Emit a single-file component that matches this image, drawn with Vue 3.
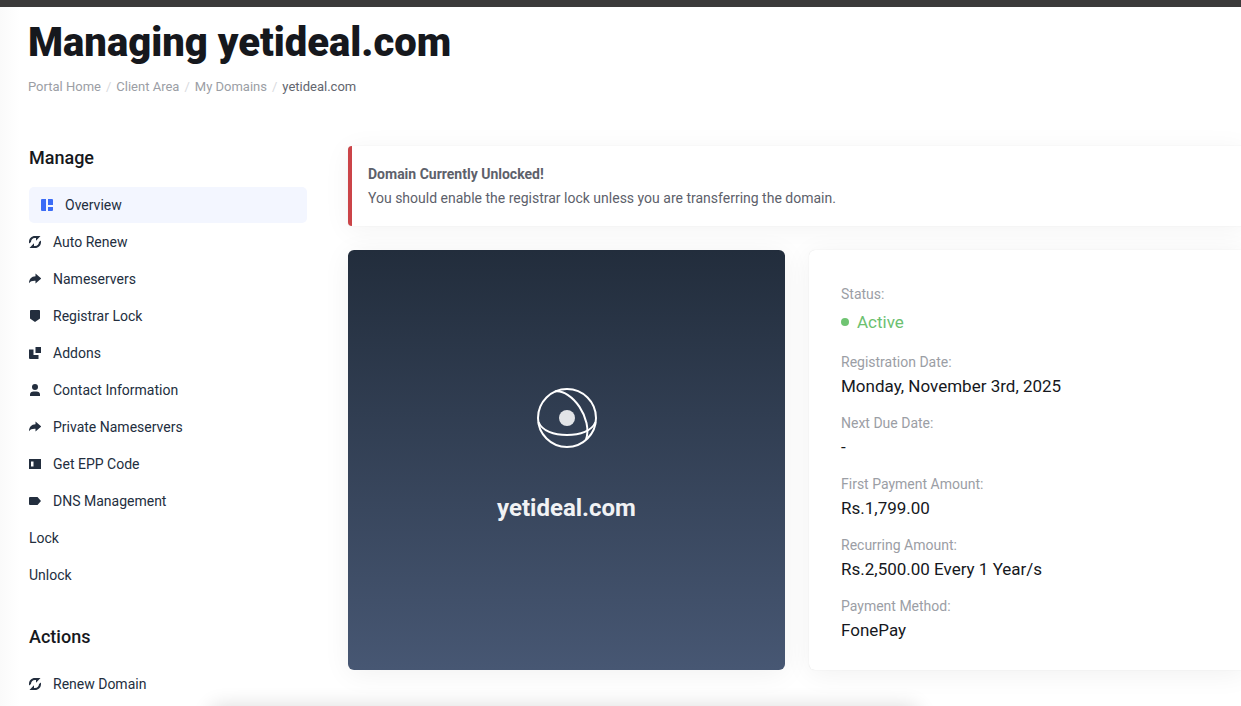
<script setup>
const crumbs = ['Portal Home', 'Client Area', 'My Domains']

const manage = [
  { label: 'Overview', icon: 'overview', active: true },
  { label: 'Auto Renew', icon: 'renew' },
  { label: 'Nameservers', icon: 'share' },
  { label: 'Registrar Lock', icon: 'shield' },
  { label: 'Addons', icon: 'addons' },
  { label: 'Contact Information', icon: 'user' },
  { label: 'Private Nameservers', icon: 'share' },
  { label: 'Get EPP Code', icon: 'code' },
  { label: 'DNS Management', icon: 'tag' },
  { label: 'Lock' },
  { label: 'Unlock' },
]

const actions = [{ label: 'Renew Domain', icon: 'renew' }]

const menus = [
  { title: 'Manage', items: manage },
  { title: 'Actions', items: actions },
]

const icons = {
  overview: 'M1 0h4v12H1a1 1 0 0 1-1-1V1a1 1 0 0 1 1-1zM7 0h4a1 1 0 0 1 1 1v5H7zM7 8h5v3a1 1 0 0 1-1 1H7z',
  renew: 'M0 7.500V6C0 2.500 2.500 0 6 0H11.500L7 4.800V2H6C3.500 2 2 3.700 2 6zM12 4.500V6c0 3.500-2.500 6-6 6H.5L5 7.200V10H6c2.500 0 4-1.700 4-4z',
  share: 'M6.500 .5L12.200 5.500 6.500 10.500V7.800C3.500 7.600 1.500 8.300 0 10.200 0 6 2.500 3.300 6.500 3.200z',
  shield: 'M2 0h8a1 1 0 0 1 1 1v7.500L6 12 1 8.500V1a1 1 0 0 1 1-1z',
  addons: 'M6.500 0H12v6H6.500zM0 2.500h4.500V8H9.500v4H1a1 1 0 0 1-1-1z',
  user: 'M6 0a3 3 0 1 1 0 6 3 3 0 0 1 0-6zM1 12v-1.500C1 8.500 2.500 7.500 4.500 7.500h3c2 0 3.500 1 3.500 3V12z',
  code: 'M0 1h12v10H0zM2 3.500v5h2.500v-5z',
  tag: 'M1 2h7.500L12 6 8.500 10H1a1 1 0 0 1-1-1V3a1 1 0 0 1 1-1z',
}

const details = [
  { label: 'Status:', value: 'Active', status: true },
  { label: 'Registration Date:', value: 'Monday, November 3rd, 2025' },
  { label: 'Next Due Date:', value: '-' },
  { label: 'First Payment Amount:', value: 'Rs.1,799.00' },
  { label: 'Recurring Amount:', value: 'Rs.2,500.00 Every 1 Year/s' },
  { label: 'Payment Method:', value: 'FonePay' },
]
</script>

<template>
  <div class="page">
    <div class="topbar"></div>
    <header class="header">
      <h1>Managing yetideal.com</h1>
      <nav aria-label="Breadcrumb">
        <ol class="crumbs">
          <li v-for="c in crumbs" :key="c"><a href="#">{{ c }}</a></li>
          <li class="current" aria-current="page">yetideal.com</li>
        </ol>
      </nav>
    </header>

    <div class="layout">
      <aside class="sidebar">
        <section v-for="menu in menus" :key="menu.title" class="menu">
          <h2>{{ menu.title }}</h2>
          <nav :aria-label="menu.title">
            <a v-for="item in menu.items" :key="item.label" href="#" class="item" :class="{ active: item.active }">
              <svg v-if="item.icon" viewBox="0 0 12 12" aria-hidden="true">
                <path :d="icons[item.icon]" fill-rule="evenodd" />
              </svg>
              <span>{{ item.label }}</span>
            </a>
          </nav>
        </section>
      </aside>

      <main class="main">
        <div class="alert" role="alert">
          <strong>Domain Currently Unlocked!</strong>
          <p>You should enable the registrar lock unless you are transferring the domain.</p>
        </div>
        <div class="cards">
          <section class="domain">
            <svg viewBox="0 0 60 60" fill="none" stroke="#fff" stroke-width="2" aria-hidden="true">
              <circle cx="30" cy="30" r="29" />
              <path d="M1.500 34C5 43 17 47 30 47s25-4 28.500-13" />
              <path d="M18 3.500C35 1 56 31 49 51.500" />
              <circle cx="30" cy="30" r="8" fill="#e2e4e7" stroke="none" />
            </svg>
            <h3>yetideal.com</h3>
          </section>
          <dl class="details">
            <div v-for="d in details" :key="d.label" class="row">
              <dt>{{ d.label }}</dt>
              <dd :class="{ status: d.status }">{{ d.value }}</dd>
            </div>
          </dl>
        </div>
      </main>
    </div>
    <div class="tray"></div>
  </div>
</template>

<style>
body {
  background: #fff;
}
</style>

<style scoped>
.page {
  position: relative;
  height: 100vh;
  overflow: hidden;
  background: linear-gradient(90deg, #fafafa, #fff 20px);
  font-family: Roboto, "Liberation Sans", sans-serif;
  color: #16181d;
}
.page * {
  box-sizing: border-box;
}
.topbar {
  height: 7px;
  background: #3b3a3a;
}
.header {
  padding: 12px 28px 0;
}
h1 {
  margin: 0;
  font-size: 40px;
  line-height: 48px;
  font-weight: 900;
}
.crumbs {
  display: flex;
  margin: 12px 0 0;
  padding: 0;
  list-style: none;
  font-size: 13px;
  line-height: 16px;
  color: #62656e;
}
.crumbs a {
  color: #9b9ea5;
  text-decoration: none;
}
.crumbs li + li::before {
  content: "/";
  padding: 0 5px;
  color: #d8dade;
}
.layout {
  display: grid;
  grid-template-columns: 278px 1fr;
  gap: 41px;
  margin: 51px -5px 0 29px;
}
.menu + .menu {
  margin-top: 32px;
}
h2 {
  margin: 0;
  padding-bottom: 17px;
  font-size: 18px;
  line-height: 24px;
  font-weight: 500;
}
.item {
  display: flex;
  align-items: center;
  gap: 12px;
  height: 36px;
  margin-bottom: 1px;
  border-radius: 5px;
  font-size: 14px;
  color: #232e3e;
  text-decoration: none;
}
.item svg {
  width: 12px;
  height: 12px;
  fill: #232e3e;
}
.item.active {
  padding: 0 12px;
  background: #f3f6ff;
}
.item.active svg {
  fill: #3b6cf6;
}
.alert {
  padding: 16px;
  border-left: 4px solid #cb4448;
  border-radius: 4px;
  background: #fff;
  box-shadow: 0 0 1px rgba(0, 0, 0, 0.15), 0 4px 28px rgba(0, 0, 0, 0.05);
  font-size: 14px;
  line-height: 24px;
  color: #5d616b;
}
.alert strong {
  display: block;
}
.alert p {
  margin: 0;
}
.cards {
  display: grid;
  grid-template-columns: 1fr 1fr;
  gap: 24px;
  margin-top: 24px;
}
.domain {
  display: flex;
  flex-direction: column;
  align-items: center;
  justify-content: center;
  gap: 44px;
  padding-bottom: 8px;
  border-radius: 6px;
  background: linear-gradient(#222d3c, #475773);
  box-shadow: 0 4px 28px rgba(0, 0, 0, 0.06);
}
.domain svg {
  width: 60px;
  height: 60px;
}
h3 {
  margin: 0;
  font-size: 24px;
  line-height: 32px;
  font-weight: 700;
  color: #f1f2f4;
}
.details {
  display: grid;
  gap: 13px;
  margin: 0;
  padding: 32px 32px 28px;
  border-radius: 6px;
  background: #fff;
  box-shadow: 0 0 1px rgba(0, 0, 0, 0.15), 0 4px 28px rgba(0, 0, 0, 0.06);
}
dt {
  font-size: 14px;
  line-height: 24px;
  color: #9b9ea5;
}
dd {
  margin: 0;
  font-size: 17px;
  line-height: 24px;
}
dd.status {
  display: flex;
  align-items: center;
  gap: 8px;
  padding: 4px 0 3px;
  color: #6cc070;
}
dd.status::before {
  content: "";
  width: 8px;
  height: 8px;
  border-radius: 50%;
  background: #6fc472;
}
.tray {
  position: absolute;
  top: 100%;
  left: 17%;
  right: 26%;
  height: 40px;
  border-radius: 8px;
  box-shadow: 0 0 20px rgba(0, 0, 0, 0.14);
}
</style>
